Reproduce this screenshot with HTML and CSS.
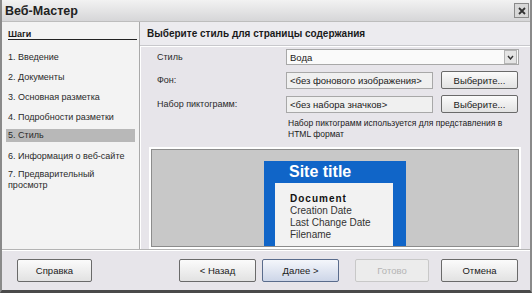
FILE: index.html
```html
<!DOCTYPE html>
<html lang="ru">
<head>
    <meta charset="UTF-8">
    <title>Веб-Мастер</title>
    <link rel="stylesheet" href="styles.css">
</head>
<body>
	<div class="window">
		<div class="title-bar">
			<span class="title">Веб-Мастер</span>
			<span class="close-btn">
				<svg width="10" height="10" viewBox="0 0 10 10">
					<path d="M2 2 L8 8 M8 2 L2 8" stroke="#333" stroke-width="1.8"/>
				</svg>
			</span>
		</div>

		<div class="wizard-body">
			<div class="steps-pane">
				<div class="steps-title"><span>Шаги</span></div>
				<div class="step">1. Введение</div>
				<div class="step">2. Документы</div>
				<div class="step">3. Основная разметка</div>
				<div class="step">4. Подробности разметки</div>
				<div class="step step-active">5. Стиль</div>
				<div class="step step-before-last">6. Информация о веб-сайте</div>
				<div class="step">7. Предварительный<br>просмотр</div>
			</div>

			<div class="page-pane">
				<div class="page-header">Выберите стиль для страницы содержания</div>

				<div class="form-grid">
					<div class="form-label">Стиль</div>
					<div class="combo">
						<span>Вода</span>
						<span class="combo-arrow">
							<svg width="7" height="5" viewBox="0 0 7 5"><path d="M1 1 L3.5 4 L6 1" stroke="#333" stroke-width="1.4" fill="none"/></svg>
						</span>
					</div>

					<div class="form-label">Фон:</div>
					<div class="field">&lt;без фонового изображения&gt;</div>
					<button class="btn btn-small">Выберите...</button>

					<div class="form-label">Набор пиктограмм:</div>
					<div class="field">&lt;без набора значков&gt;</div>
					<button class="btn btn-small">Выберите...</button>

					<div class="form-note">Набор пиктограмм используется для представления в<br>HTML формат</div>
				</div>

				<div class="preview-frame">
					<div class="preview-page">
						<div class="site-title">Site title</div>
						<div class="preview-content">
							<div class="doc-title">Document</div>
							<div>Creation Date</div>
							<div>Last Change Date</div>
							<div>Filename</div>
						</div>
					</div>
				</div>
			</div>
		</div>

		<div class="footer">
			<button class="btn btn-help">Справка</button>
			<div class="footer-right">
				<button class="btn">&lt; Назад</button>
				<button class="btn btn-default">Далее &gt;</button>
				<button class="btn btn-disabled">Готово</button>
				<button class="btn">Отмена</button>
			</div>
		</div>
	</div>
</body>
</html>
```

FILE: styles.css
```css
		html, body {
			margin: 0;
			padding: 0;
			background: #e7e5ea;
		}

		.window {
			width: 532px;
			height: 293px;
			box-sizing: border-box;
			border: 2px solid #8a8a8a;
			border-bottom: 3px solid #4a4a4a;
			border-top: none;
			display: flex;
			flex-direction: column;
			font-family: "Liberation Sans", Arial, sans-serif;
			font-size: 9px;
			color: #1a1a1a;
			background: #e7e5ea;
		}

		.title-bar {
			height: 21px;
			flex: none;
			display: flex;
			align-items: center;
			justify-content: space-between;
			padding: 0 1px 0 3px;
			background: linear-gradient(#f2f2f2, #d6d6d8);
			border-bottom: 1px solid #bdbdbd;
		}

		.title {
			font-size: 12.5px;
			font-weight: bold;
			color: #222;
		}

		.close-btn {
			width: 13px;
			height: 13px;
			display: flex;
			align-items: center;
			justify-content: center;
			background: #d8d8d8;
			border: 1px solid #8a8a8a;
		}

		.wizard-body {
			flex: 1;
			display: flex;
			min-height: 0;
		}

		.steps-pane {
			width: 133px;
			flex: none;
			padding: 8px 0 0 4px;
			background: #f3f3f3;
			border-right: 1px solid #a9a9a9;
			box-shadow: 1px 0 0 #ffffff;
			font-size: 9px;
		}

		.steps-title {
			font-weight: bold;
			font-size: 9px;
			line-height: 9px;
			border-bottom: 1px solid #222;
			margin: 0 2px 11px 2px;
		}

		.step {
			padding: 1px 0 1px 2px;
			margin-bottom: 7px;
			margin-right: 4px;
			line-height: 11px;
			color: #2a2a2a;
		}

		.step-active {
			background: #b8b8b8;
			margin-top: -2px;
			margin-bottom: 8px;
		}

		.step-before-last {
			margin-bottom: 5px;
		}

		.page-pane {
			flex: 1;
			display: flex;
			flex-direction: column;
			min-width: 0;
		}

		.page-header {
			font-weight: bold;
			font-size: 10px;
			height: 23px;
			flex: none;
			display: flex;
			align-items: center;
			padding-left: 7px;
			background: #ecebef;
			border-bottom: 1px solid #c8c8cc;
			box-shadow: 0 1px 0 #ffffff;
		}

		.form-grid {
			display: grid;
			grid-template-columns: 121px 147px 78px;
			column-gap: 8px;
			row-gap: 6px;
			padding: 3px 0 0 17px;
			align-items: center;
		}

		.form-label {
			color: #2a2a2a;
		}

		.combo {
			grid-column: 2 / 4;
			height: 16px;
			box-sizing: border-box;
			border: 1px solid #a8a8a8;
			background: #fafafa;
			display: flex;
			align-items: center;
			justify-content: space-between;
			padding-left: 3px;
			font-size: 9.5px;
		}

		.combo-arrow {
			width: 11px;
			height: 12px;
			margin-right: 1px;
			display: flex;
			align-items: center;
			justify-content: center;
			background: #e4e4e4;
			border: 1px solid #b4b4b4;
		}

		.field {
			height: 17px;
			box-sizing: border-box;
			border: 1px solid #a8a8a8;
			background: #f0f0f0;
			display: flex;
			align-items: center;
			padding-left: 3px;
			white-space: nowrap;
			overflow: hidden;
			font-size: 9.5px;
		}

		.form-note {
			grid-column: 2 / 4;
			padding-left: 2px;
			font-size: 8.5px;
			line-height: 11px;
			margin-top: -1px;
		}

		.btn {
			font-family: "Liberation Sans", Arial, sans-serif;
			font-size: 9.5px;
			color: #1a1a1a;
			height: 23px;
			width: 77px;
			box-sizing: border-box;
			border: 1px solid #6a6a6a;
			border-radius: 2px;
			background: linear-gradient(#fbfbfb, #e2e2e2);
			padding: 0;
		}

		.btn-small {
			height: 18px;
		}

		.btn-help {
			width: 75px;
		}

		.btn-default {
			border-color: #5a6c8c;
			background: linear-gradient(#f4f6fb, #cdd6e8);
		}

		.btn-disabled {
			width: 74px;
			color: #b4b4b4;
			border-color: #c8c8c8;
			background: #ececec;
		}

		.preview-frame {
			margin: 9px 11px 2px 11px;
			flex: 1;
			border: 1px solid #8c8c8c;
			box-shadow: 0 0 0 2px #ffffff;
			background: #c8c8c8;
			display: flex;
			justify-content: center;
			overflow: hidden;
			padding-top: 11px;
		}

		.preview-page {
			width: 142px;
			background: #1065c8;
			padding: 0 13px 0 11px;
			box-sizing: border-box;
		}

		.site-title {
			color: #ffffff;
			font-family: "Liberation Sans", Arial, sans-serif;
			font-weight: bold;
			font-size: 16px;
			height: 22px;
			line-height: 22px;
			padding-left: 14px;
		}

		.preview-content {
			background: #f2f2f2;
			height: 100px;
			padding: 10px 0 0 15px;
			font-size: 10px;
			line-height: 12px;
			color: #333;
		}

		.doc-title {
			font-weight: bold;
			color: #111;
			letter-spacing: 1px;
		}

		.footer {
			height: 40px;
			flex: none;
			display: flex;
			align-items: center;
			justify-content: space-between;
			padding: 0 12px 0 15px;
			border-top: 1px solid #b4b4b4;
			box-shadow: inset 0 1px 0 #ffffff;
		}

		.footer-right {
			display: flex;
			gap: 6px;
		}

		.footer-right .btn-disabled {
			margin-left: 10px;
			margin-right: 6px;
		}
```
